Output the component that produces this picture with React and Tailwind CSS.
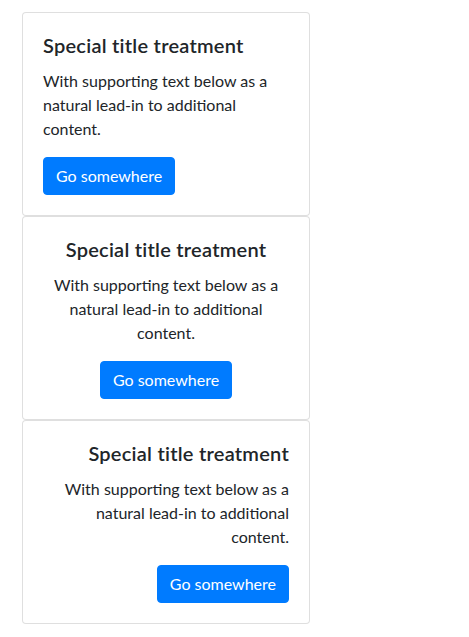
const cards = [
  { align: "text-left" },
  { align: "text-center" },
  { align: "text-right" },
];

function Card({ align }) {
  return (
    <div className="w-[288px] bg-white border border-[rgba(0,0,0,0.125)] rounded">
      <div className={`p-5 ${align}`}>
        <h5 className="text-[20px] leading-[24px] font-semibold tracking-[0.25px] text-[#212529] mb-3">
          Special title treatment
        </h5>
        <p className="text-base leading-6 text-[#212529] mb-4">
          With supporting text below as a natural lead-in to additional content.
        </p>
        <a
          href="#"
          className="inline-block bg-[#007bff] text-white text-base leading-6 px-3 py-[6px] border border-[#007bff] rounded"
        >
          Go somewhere
        </a>
      </div>
    </div>
  );
}

export default function App() {
  return (
    <div
      className="min-h-screen bg-white pt-3 pl-[22px]"
      style={{ fontFamily: "Lato, 'Noto Sans', sans-serif" }}
    >
      {cards.map((c, i) => (
        <Card key={i} align={c.align} />
      ))}
    </div>
  );
}
